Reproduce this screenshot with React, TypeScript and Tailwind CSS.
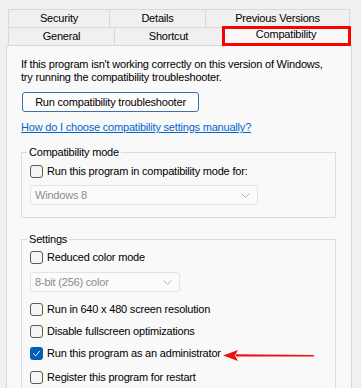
import React from 'react';

const Tab: React.FC<{ label: string; width: string; last?: boolean; selected?: boolean }> = ({ label, width, last, selected }) => (
  <div
    className={`${width} flex items-center justify-center border-l border-t border-[#d9d9d9] ${last ? 'border-r' : ''} ${
      selected ? 'bg-[#f9f9f9] pb-[4px]' : 'bg-[#f0f0f0]'
    }`}
  >
    {label}
  </div>
);

const Checkbox: React.FC<{ label: string; checked?: boolean }> = ({ label, checked }) => (
  <div className="flex items-center h-[14px] gap-[4px]">
    {checked ? (
      <span className="w-[13px] h-[13px] rounded-[3px] bg-[#005fb8] flex items-center justify-center">
        <svg width="9" height="9" viewBox="0 0 9 9" fill="none">
          <path d="M1.5 4.8 L3.6 6.8 L7.6 2.2" stroke="#ffffff" strokeWidth="1" strokeLinecap="round" strokeLinejoin="round" />
        </svg>
      </span>
    ) : (
      <span className="w-[13px] h-[13px] rounded-[3px] border border-[#5a5a5a] bg-[#f5f5f5]" />
    )}
    <span>{label}</span>
  </div>
);

const Dropdown: React.FC<{ value: string; width: string }> = ({ value, width }) => (
  <div className={`${width} h-[20px] flex items-center justify-between pl-[4px] pr-[7px] border border-[#e3e3e3] bg-[#fbfbfb] rounded-[3px] text-[#8c8c8c]`}>
    <span>{value}</span>
    <svg width="9" height="5" viewBox="0 0 9 5" fill="none">
      <path d="M0.5 0.5 L4.5 4.5 L8.5 0.5" stroke="#b0b0b0" strokeWidth="1" />
    </svg>
  </div>
);

export default function App() {
  return (
    <div className="relative w-[361px] h-[388px] overflow-hidden bg-[#f0f0f0] text-black text-[11px] tracking-[-0.2px] font-['Liberation_Sans',Arial,sans-serif]">
      {/* tabs */}
      <div className="pt-[9px] pl-[8px]">
        <div className="flex h-[18px]">
          <Tab label="Security" width="w-[101px]" />
          <Tab label="Details" width="w-[96px]" />
          <Tab label="Previous Versions" width="w-[145px]" last />
        </div>
        <div className="flex h-[18px]">
          <Tab label="General" width="w-[106px]" />
          <Tab label="Shortcut" width="w-[108px]" />
          <Tab label="Compatibility" width="w-[128px]" last selected />
        </div>
      </div>

      {/* panel */}
      <div className="ml-[6px] w-[346px] h-[400px] border border-[#d9d9d9] bg-[#f9f9f9] pl-[14px] pt-[12px]">
        <p className="leading-[13px]">
          If this program isn't working correctly on this version of Windows,
          <br />
          try running the compatibility troubleshooter.
        </p>
        <button className="mt-[8px] ml-[1px] w-[177px] h-[20px] border border-[#3d6fae] rounded-[3px] bg-[#fdfdfd] flex items-center justify-center">
          Run compatibility troubleshooter
        </button>
        <a className="block mt-[8px] leading-[14px] text-[#0066cc] underline w-fit">
          How do I choose compatibility settings manually?
        </a>

        <fieldset className="mt-[11px] w-[315px] border border-[#dcdcdc] px-[8px] pb-[12px]">
          <legend className="ml-[-3px] px-[2px] leading-[14px]">Compatibility mode</legend>
          <div className="mt-[5px]">
            <Checkbox label="Run this program in compatibility mode for:" />
          </div>
          <div className="mt-[7px]">
            <Dropdown value="Windows 8" width="w-[228px]" />
          </div>
        </fieldset>

        <fieldset className="mt-[14px] w-[315px] border border-[#dcdcdc] px-[8px] pb-[12px]">
          <legend className="ml-[-3px] px-[2px] leading-[14px]">Settings</legend>
          <div className="mt-[4px]">
            <Checkbox label="Reduced color mode" />
          </div>
          <div className="mt-[8px]">
            <Dropdown value="8-bit (256) color" width="w-[150px]" />
          </div>
          <div className="mt-[10px]">
            <Checkbox label="Run in 640 x 480 screen resolution" />
          </div>
          <div className="mt-[8px]">
            <Checkbox label="Disable fullscreen optimizations" />
          </div>
          <div className="mt-[8px]">
            <Checkbox label="Run this program as an administrator" checked />
          </div>
          <div className="mt-[10px]">
            <Checkbox label="Register this program for restart" />
          </div>
        </fieldset>
      </div>

      {/* annotations */}
      <div className="absolute left-[222px] top-[26px] w-[129px] h-[20px] border-[3px] border-[#ff0000]" />
      <svg className="absolute left-[222px] top-[348px]" width="94" height="14" viewBox="0 0 94 14">
        <path d="M14 6.2 L92 7 L92 8.6 L14 8.4 Z" fill="#ee1111" />
        <path d="M1 7.5 L16 2 L13 7.5 L16 13 Z" fill="#ee1111" />
      </svg>
    </div>
  );
}
